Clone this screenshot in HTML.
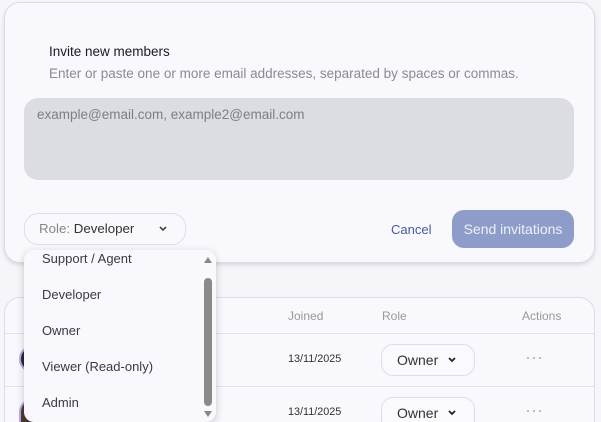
<!DOCTYPE html>
<html><head><style>
*{box-sizing:border-box;margin:0;padding:0}
html,body{width:601px;height:422px;overflow:hidden}
body{background:#f5f5fa;font-family:"Liberation Sans",sans-serif;position:relative}
.card{position:absolute;left:4px;top:2px;width:591px;height:261px;background:#f8f8fd;border:1px solid #dcdce4;border-radius:16px;box-shadow:0 2px 4px rgba(0,0,0,.12)}
.t{position:absolute;white-space:nowrap}
.ta{position:absolute;left:24px;top:98px;width:550px;height:82px;background:#dbdde2;border-radius:14px}
.role{position:absolute;left:24px;top:213px;width:162px;height:32px;border:1px solid #dedee6;border-radius:14px;background:#f8f8fd}
.btn{position:absolute;left:452px;top:210px;width:122px;height:38px;background:#8e9cc9;border-radius:12px;color:#eef0f8;font-size:14px;text-align:center;line-height:38px}
.table{position:absolute;left:4px;top:297px;width:591px;height:125px;background:#f8f8fd;border:1px solid #dcdce4;border-bottom:none;border-radius:16px 16px 0 0}
.line{position:absolute;left:5px;width:589px;height:1px;background:#e2e2ea}
.sel{position:absolute;left:381px;width:94px;height:32px;border:1px solid #dedee6;border-radius:12px;background:#fafafe;font-size:14px;color:#333;padding-left:15px;line-height:30px;overflow:hidden}
.dd{position:absolute;left:24px;top:250px;width:192px;height:172px;background:#f8f8fd;border-radius:10px;box-shadow:0 2px 8px rgba(0,0,0,.2);overflow:hidden}
.dd div{position:absolute;left:18px;font-size:13px;color:#3a3a44}
</style></head><body>
<div class="card"></div>
<div class="t" style="left:49px;top:44px;font-size:13.5px;color:#1a1a22">Invite new members</div>
<div class="t" style="left:49px;top:66px;font-size:13.5px;color:#8a8a94">Enter or paste one or more email addresses, separated by spaces or commas.</div>
<div class="ta"></div>
<div class="t" style="left:37px;top:107px;font-size:13.5px;color:#7c7f86">example@email.com, example2@email.com</div>
<div class="role"></div>
<div class="t" style="left:39px;top:221px;font-size:13.3px;color:#888">Role: <span style="color:#333">Developer</span></div>
<svg style="position:absolute;left:158px;top:225px" width="10" height="8"><path d="M2 2l3 3 3-3" stroke="#444" stroke-width="1.6" fill="none"/></svg>
<div class="t" style="left:391px;top:222px;font-size:13px;color:#4a5a9e">Cancel</div>
<div class="btn">Send invitations</div>
<div class="table"></div>
<div class="t" style="left:288px;top:309px;font-size:12px;color:#999">Joined</div>
<div class="t" style="left:382px;top:309px;font-size:12px;color:#999">Role</div>
<div class="t" style="left:522px;top:309px;font-size:12px;color:#999">Actions</div>
<div class="line" style="top:333px"></div>
<div class="line" style="top:386px"></div>
<div style="position:absolute;left:19px;top:345px;width:28px;height:28px;border-radius:50%;background:#2a2630;border:2px solid #b9a6e8"></div>
<div style="position:absolute;left:19px;top:398px;width:28px;height:24px;border-radius:14px 14px 0 0;background:#4a3c2c;border:2px solid #b9a6e8;border-bottom:none"></div>
<div class="t" style="left:288px;top:353px;font-size:10.8px;color:#333">13/11/2025</div>
<div class="t" style="left:288px;top:406px;font-size:10.8px;color:#333">13/11/2025</div>
<div class="sel" style="top:344px">Owner</div>
<div class="sel" style="top:397px;height:25px;border-bottom:none;border-radius:12px 12px 0 0">Owner</div>
<svg style="position:absolute;left:447px;top:356px" width="10" height="8"><path d="M2 2l3 3 3-3" stroke="#222" stroke-width="1.8" fill="none"/></svg>
<svg style="position:absolute;left:447px;top:409px" width="10" height="8"><path d="M2 2l3 3 3-3" stroke="#222" stroke-width="1.8" fill="none"/></svg>
<svg style="position:absolute;left:526px;top:356px" width="18" height="4"><circle cx="2" cy="2" r="1" fill="#aaa"/><circle cx="8" cy="2" r="1" fill="#aaa"/><circle cx="14" cy="2" r="1" fill="#aaa"/></svg>
<svg style="position:absolute;left:526px;top:409px" width="18" height="4"><circle cx="2" cy="2" r="1" fill="#aaa"/><circle cx="8" cy="2" r="1" fill="#aaa"/><circle cx="14" cy="2" r="1" fill="#aaa"/></svg>
<div class="dd">
<div style="top:1px">Support / Agent</div>
<div style="top:37px">Developer</div>
<div style="top:73px">Owner</div>
<div style="top:109px">Viewer (Read-only)</div>
<div style="top:145px">Admin</div>
<svg style="position:absolute;left:178px;top:3px" width="12" height="166"><path d="M2 10l4-6 4 6z" fill="#888"/><rect x="2" y="25" width="8" height="128" rx="4" fill="#8a8a8a"/><path d="M2 158l4 6 4-6z" fill="#888"/></svg>
</div>
</body></html>
